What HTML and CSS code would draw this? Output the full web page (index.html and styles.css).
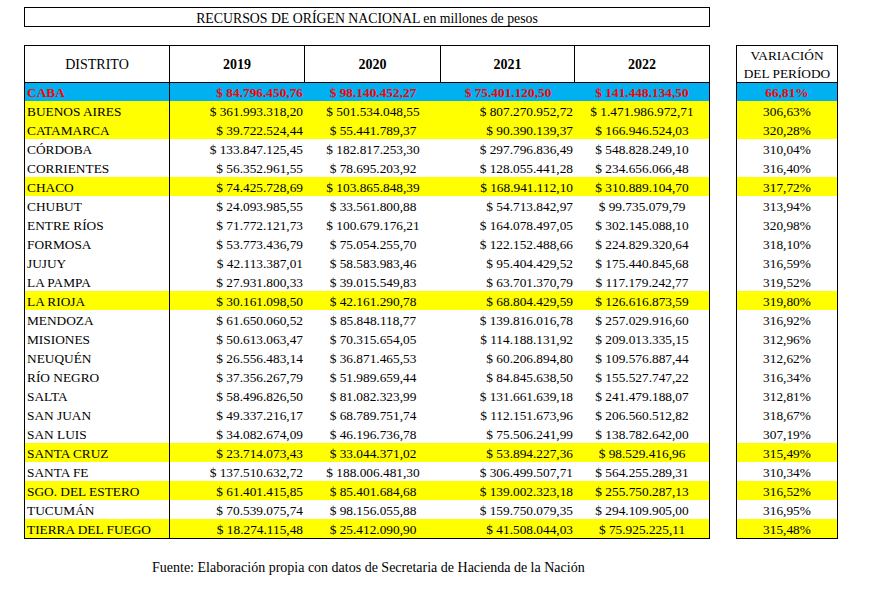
FILE: index.html
```html
<!DOCTYPE html>
<html lang="es">
<head>
<meta charset="utf-8">
<title>Recursos de origen nacional</title>
<link rel="stylesheet" href="styles.css">
</head>
<body>
<div class="page">
  <div class="title">RECURSOS DE ORÍGEN NACIONAL en millones de pesos</div>
  <div class="tables">
    <div class="main">
      <div class="row head">
        <div class="c">DISTRITO</div>
        <div class="c b">2019</div>
        <div class="c b">2020</div>
        <div class="c b">2021</div>
        <div class="c b">2022</div>
      </div>
      <div class="row caba">
        <div class="c d">CABA</div><div class="c r">$ 84.796.450,76</div><div class="c m">$ 98.140.452,27</div><div class="c m">$ 75.401.120,50</div><div class="c m">$ 141.448.134,50</div>
      </div>
      <div class="row y"><div class="c d">BUENOS AIRES</div><div class="c r">$ 361.993.318,20</div><div class="c m">$ 501.534.048,55</div><div class="c r">$ 807.270.952,72</div><div class="c m">$ 1.471.986.972,71</div></div>
      <div class="row y"><div class="c d">CATAMARCA</div><div class="c r">$ 39.722.524,44</div><div class="c m">$ 55.441.789,37</div><div class="c r">$ 90.390.139,37</div><div class="c m">$ 166.946.524,03</div></div>
      <div class="row"><div class="c d">CÓRDOBA</div><div class="c r">$ 133.847.125,45</div><div class="c m">$ 182.817.253,30</div><div class="c r">$ 297.796.836,49</div><div class="c m">$ 548.828.249,10</div></div>
      <div class="row"><div class="c d">CORRIENTES</div><div class="c r">$ 56.352.961,55</div><div class="c m">$ 78.695.203,92</div><div class="c r">$ 128.055.441,28</div><div class="c m">$ 234.656.066,48</div></div>
      <div class="row y"><div class="c d">CHACO</div><div class="c r">$ 74.425.728,69</div><div class="c m">$ 103.865.848,39</div><div class="c r">$ 168.941.112,10</div><div class="c m">$ 310.889.104,70</div></div>
      <div class="row"><div class="c d">CHUBUT</div><div class="c r">$ 24.093.985,55</div><div class="c m">$ 33.561.800,88</div><div class="c r">$ 54.713.842,97</div><div class="c m">$ 99.735.079,79</div></div>
      <div class="row"><div class="c d">ENTRE RÍOS</div><div class="c r">$ 71.772.121,73</div><div class="c m">$ 100.679.176,21</div><div class="c r">$ 164.078.497,05</div><div class="c m">$ 302.145.088,10</div></div>
      <div class="row"><div class="c d">FORMOSA</div><div class="c r">$ 53.773.436,79</div><div class="c m">$ 75.054.255,70</div><div class="c r">$ 122.152.488,66</div><div class="c m">$ 224.829.320,64</div></div>
      <div class="row"><div class="c d">JUJUY</div><div class="c r">$ 42.113.387,01</div><div class="c m">$ 58.583.983,46</div><div class="c r">$ 95.404.429,52</div><div class="c m">$ 175.440.845,68</div></div>
      <div class="row"><div class="c d">LA PAMPA</div><div class="c r">$ 27.931.800,33</div><div class="c m">$ 39.015.549,83</div><div class="c r">$ 63.701.370,79</div><div class="c m">$ 117.179.242,77</div></div>
      <div class="row y"><div class="c d">LA RIOJA</div><div class="c r">$ 30.161.098,50</div><div class="c m">$ 42.161.290,78</div><div class="c r">$ 68.804.429,59</div><div class="c m">$ 126.616.873,59</div></div>
      <div class="row"><div class="c d">MENDOZA</div><div class="c r">$ 61.650.060,52</div><div class="c m">$ 85.848.118,77</div><div class="c r">$ 139.816.016,78</div><div class="c m">$ 257.029.916,60</div></div>
      <div class="row"><div class="c d">MISIONES</div><div class="c r">$ 50.613.063,47</div><div class="c m">$ 70.315.654,05</div><div class="c r">$ 114.188.131,92</div><div class="c m">$ 209.013.335,15</div></div>
      <div class="row"><div class="c d">NEUQUÉN</div><div class="c r">$ 26.556.483,14</div><div class="c m">$ 36.871.465,53</div><div class="c r">$ 60.206.894,80</div><div class="c m">$ 109.576.887,44</div></div>
      <div class="row"><div class="c d">RÍO NEGRO</div><div class="c r">$ 37.356.267,79</div><div class="c m">$ 51.989.659,44</div><div class="c r">$ 84.845.638,50</div><div class="c m">$ 155.527.747,22</div></div>
      <div class="row"><div class="c d">SALTA</div><div class="c r">$ 58.496.826,50</div><div class="c m">$ 81.082.323,99</div><div class="c r">$ 131.661.639,18</div><div class="c m">$ 241.479.188,07</div></div>
      <div class="row"><div class="c d">SAN JUAN</div><div class="c r">$ 49.337.216,17</div><div class="c m">$ 68.789.751,74</div><div class="c r">$ 112.151.673,96</div><div class="c m">$ 206.560.512,82</div></div>
      <div class="row"><div class="c d">SAN LUIS</div><div class="c r">$ 34.082.674,09</div><div class="c m">$ 46.196.736,78</div><div class="c r">$ 75.506.241,99</div><div class="c m">$ 138.782.642,00</div></div>
      <div class="row y"><div class="c d">SANTA CRUZ</div><div class="c r">$ 23.714.073,43</div><div class="c m">$ 33.044.371,02</div><div class="c r">$ 53.894.227,36</div><div class="c m">$ 98.529.416,96</div></div>
      <div class="row"><div class="c d">SANTA FE</div><div class="c r">$ 137.510.632,72</div><div class="c m">$ 188.006.481,30</div><div class="c r">$ 306.499.507,71</div><div class="c m">$ 564.255.289,31</div></div>
      <div class="row y"><div class="c d">SGO. DEL ESTERO</div><div class="c r">$ 61.401.415,85</div><div class="c m">$ 85.401.684,68</div><div class="c r">$ 139.002.323,18</div><div class="c m">$ 255.750.287,13</div></div>
      <div class="row"><div class="c d">TUCUMÁN</div><div class="c r">$ 70.539.075,74</div><div class="c m">$ 98.156.055,88</div><div class="c r">$ 159.750.079,35</div><div class="c m">$ 294.109.905,00</div></div>
      <div class="row y"><div class="c d">TIERRA DEL FUEGO</div><div class="c r">$ 18.274.115,48</div><div class="c m">$ 25.412.090,90</div><div class="c r">$ 41.508.044,03</div><div class="c m">$ 75.925.225,11</div></div>
    </div>
    <div class="side">
      <div class="srow head"><div class="c">VARIACIÓN<br>DEL PERÍODO</div></div>
      <div class="srow caba"><div class="c m">66,81%</div></div>
      <div class="srow y"><div class="c m">306,63%</div></div>
      <div class="srow y"><div class="c m">320,28%</div></div>
      <div class="srow"><div class="c m">310,04%</div></div>
      <div class="srow"><div class="c m">316,40%</div></div>
      <div class="srow y"><div class="c m">317,72%</div></div>
      <div class="srow"><div class="c m">313,94%</div></div>
      <div class="srow"><div class="c m">320,98%</div></div>
      <div class="srow"><div class="c m">318,10%</div></div>
      <div class="srow"><div class="c m">316,59%</div></div>
      <div class="srow"><div class="c m">319,52%</div></div>
      <div class="srow y"><div class="c m">319,80%</div></div>
      <div class="srow"><div class="c m">316,92%</div></div>
      <div class="srow"><div class="c m">312,96%</div></div>
      <div class="srow"><div class="c m">312,62%</div></div>
      <div class="srow"><div class="c m">316,34%</div></div>
      <div class="srow"><div class="c m">312,81%</div></div>
      <div class="srow"><div class="c m">318,67%</div></div>
      <div class="srow"><div class="c m">307,19%</div></div>
      <div class="srow y"><div class="c m">315,49%</div></div>
      <div class="srow"><div class="c m">310,34%</div></div>
      <div class="srow y"><div class="c m">316,52%</div></div>
      <div class="srow"><div class="c m">316,95%</div></div>
      <div class="srow y"><div class="c m">315,48%</div></div>
    </div>
  </div>
  <p class="source">Fuente: Elaboración propia con datos de Secretaria de Hacienda de la Nación</p>
</div>
</body>
</html>
```
FILE: styles.css
```css
html, body {
  margin: 0;
  background: #fff;
}
body {
  font-family: "Liberation Serif", "Times New Roman", serif;
  font-size: 13.33px;
  color: #000;
}
.page {
  padding: 7px 0 0 24px;
}
.title {
  width: 686px;
  height: 20px;
  box-sizing: border-box;
  border: 1px solid #000;
  text-align: center;
  font-size: 13.8px;
  line-height: 15px;
  padding-top: 3px;
  white-space: nowrap;
}
.tables {
  display: flex;
  align-items: flex-start;
  gap: 26px;
  margin-top: 18px;
}
.main {
  width: 686px;
  box-sizing: border-box;
  border: 1px solid #000;
}
.side {
  width: 102px;
  box-sizing: border-box;
  border: 1px solid #000;
}
.row {
  display: grid;
  grid-template-columns: 145px 135px 136px 134px 134px;
  height: 19px;
}
.srow {
  display: grid;
  grid-template-columns: 1fr;
  height: 19px;
}
.c {
  box-sizing: border-box;
  line-height: 16px;
  padding-top: 3px;
  white-space: nowrap;
  overflow: visible;
}
.row.head, .srow.head {
  height: 37px;
  border-bottom: 1px solid #000;
  box-sizing: border-box;
}
.head .c {
  display: flex;
  align-items: center;
  justify-content: center;
  text-align: center;
  padding-top: 1px;
  line-height: 18px;
  border-right: 1px solid #000;
}
.row.head .c {
  font-size: 14px;
}
.head .c:last-child {
  border-right: none;
}
.b {
  font-weight: bold;
}
.d {
  padding-left: 2px;
  border-right: 1px solid #000;
}
.r {
  text-align: right;
  padding-right: 2px;
}
.m {
  text-align: center;
}
.y {
  background: #ffff00;
}
.caba {
  height: 18px;
  background: #00b0f0;
  color: #ff0000;
  font-weight: bold;
}
.caba .c {
  padding-top: 2px;
}
.source {
  margin: 21px 0 0 128px;
  font-size: 14px;
  line-height: 16px;
}
```
